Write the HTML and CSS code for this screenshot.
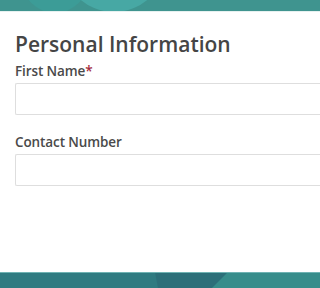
FILE: index.html
```html
<!DOCTYPE html>
<html>
<head>
<meta charset="utf-8">
<link rel="stylesheet" href="styles.css">
</head>
<body>
<div class="page">
  <div class="band band-top">
    <svg class="band-art" width="400" height="12" viewBox="0 0 400 12">
      <rect width="400" height="12" fill="#3f948f"/>
      <circle cx="55" cy="-20" r="33" fill="#3c9c97"/>
      <circle cx="114" cy="-40" r="52" fill="#47a8a4"/>
    </svg>
  </div>
  <main class="content">
    <h1 class="title">Personal Information</h1>
    <div class="field">
      <label class="label">First Name<span class="req">*</span></label>
      <div class="input"></div>
    </div>
    <div class="field">
      <label class="label">Contact Number</label>
      <div class="input"></div>
    </div>
  </main>
  <div class="band band-bottom">
    <svg class="band-art" width="400" height="16" viewBox="0 0 400 16">
      <rect width="400" height="16" fill="#2f7b81"/>
      <polygon points="155,0 228,0 215,16 158,16" fill="#2c6f79"/>
      <polygon points="228,0 400,0 400,16 212,16" fill="#378d8b"/>
      <rect width="400" height="1" fill="#6fb3b3"/>
    </svg>
  </div>
</div>
</body>
</html>
```
FILE: styles.css
```css
html, body {
  margin: 0;
  padding: 0;
  background: #ffffff;
}
.page {
  width: 100%;
  height: 288px;
  display: flex;
  flex-direction: column;
  overflow: hidden;
  font-family: "Open Sans", Lato, sans-serif;
  color: #454545;
}
.band {
  flex: none;
  overflow: hidden;
}
.band-top {
  height: 12px;
  border-bottom: 1px solid #e6f1f0;
  box-sizing: border-box;
}
.band-bottom {
  height: 16px;
}
.band-art {
  display: block;
}
.content {
  flex: 1;
  padding: 20px 0 0 15px;
}
.title {
  margin: 0;
  font-size: 21px;
  line-height: 24px;
  font-weight: 600;
  color: #454545;
}
.field {
  display: flex;
  flex-direction: column;
  gap: 3px;
}
.field + .field {
  margin-top: 18px;
}
.title + .field {
  margin-top: 6px;
}
.label {
  font-size: 13.5px;
  line-height: 18px;
  font-weight: 600;
  letter-spacing: -0.1px;
  color: #4a4a4a;
}
.req {
  color: #a52a3a;
}
.input {
  height: 32px;
  box-sizing: border-box;
  border: 1px solid #dedede;
  border-right: none;
  border-radius: 2px 0 0 2px;
  background: #fff;
}
```
